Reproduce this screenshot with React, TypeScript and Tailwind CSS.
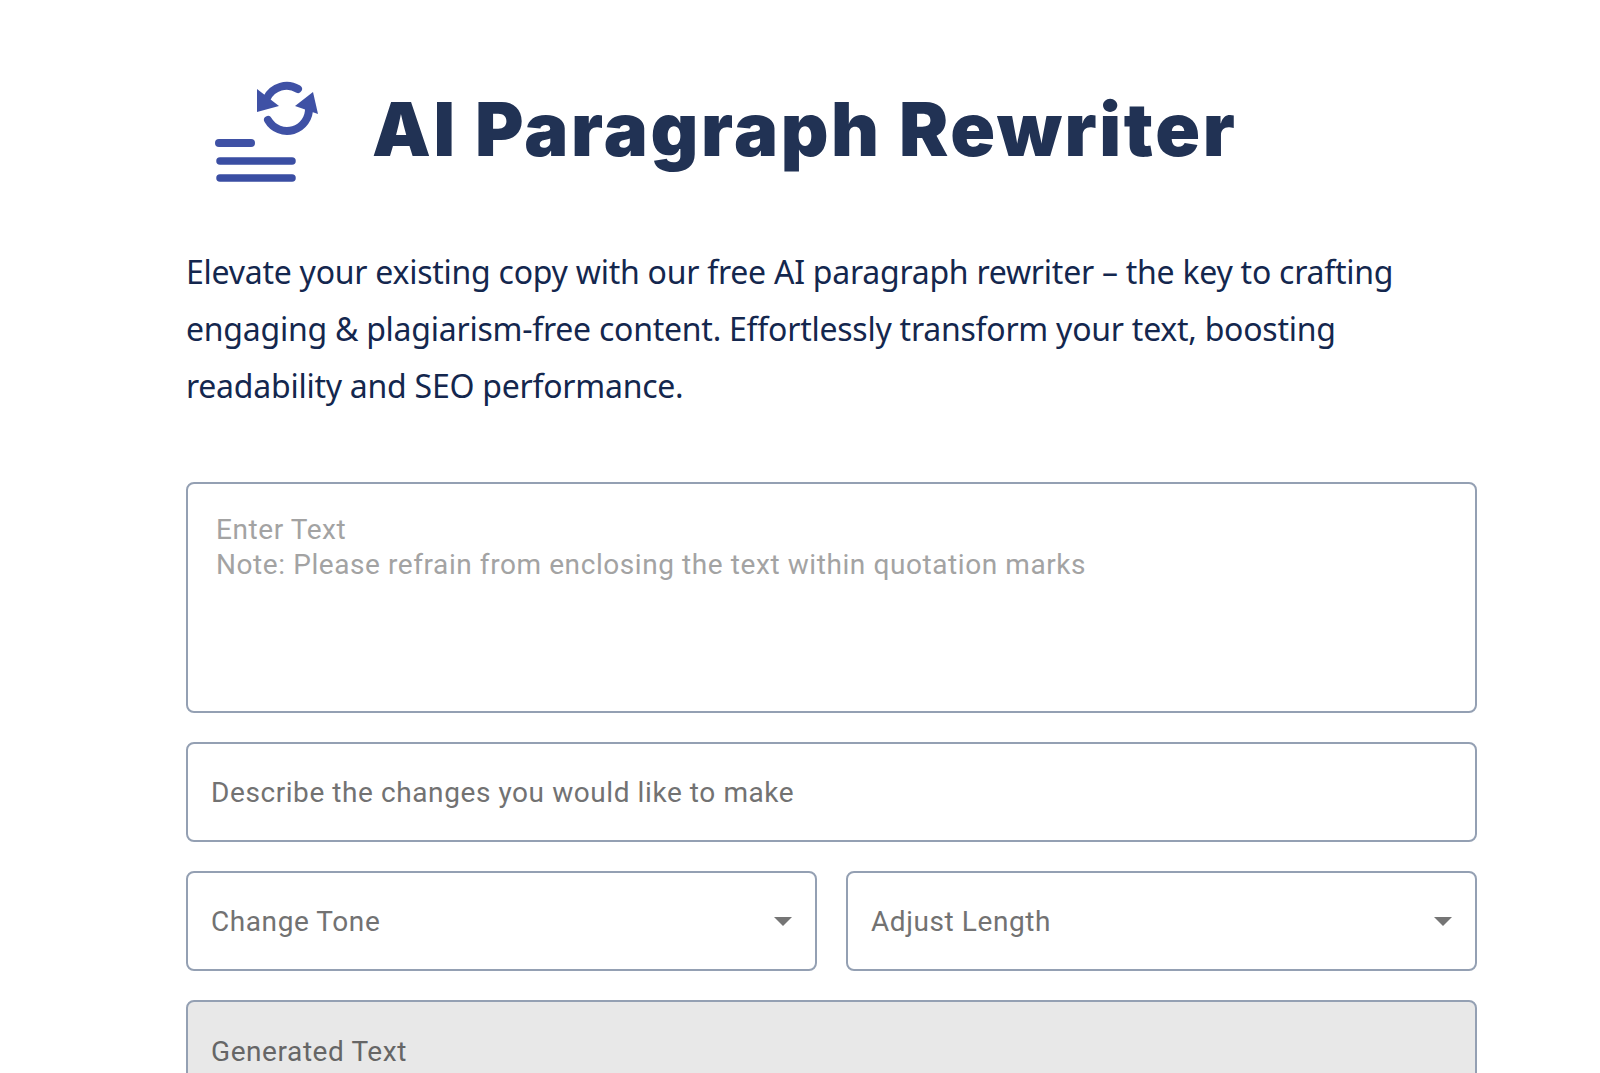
import React from 'react';

const LogoIcon = () => (
    <svg width="112" height="108" viewBox="0 3 112 108" fill="none" className="shrink-0">
        <path d="M57 21 A22 22 0 0 1 88 12" stroke="#3f51a5" strokeWidth="8" strokeLinecap="round" />
        <path d="M58 43 A22 22 0 0 0 99 31" stroke="#3f51a5" strokeWidth="8" strokeLinecap="round" />
        <path d="M47 12 L47 35 L69 29 Z" fill="#3f51a5" />
        <path d="M103 15 L108 37 L85 29 Z" fill="#3f51a5" />
        <path d="M9 66 H41" stroke="#3f51a5" strokeWidth="8" strokeLinecap="round" />
        <path d="M10 84 H82" stroke="#3a4ea3" strokeWidth="7.5" strokeLinecap="round" />
        <path d="M10 101 H82" stroke="#3a4ea3" strokeWidth="7.5" strokeLinecap="round" />
    </svg>
);

const Caret = () => (
    <span className="w-0 h-0 border-l-[9px] border-r-[9px] border-t-[9px] border-l-transparent border-r-transparent border-t-[#757575]" />
);

const SelectBox: React.FC<{ label: string }> = ({ label }) => (
    <div className="w-[631px] h-[100px] border-2 border-[#94a0b3] rounded-lg bg-white flex items-center justify-between pl-[23px] pr-[23px]">
        <span className="pt-[2px]">{label}</span>
        <Caret />
    </div>
);

const App: React.FC = () => {
    return (
        <div className="w-[1600px] h-[1073px] overflow-hidden bg-white pl-[186px] pr-[123px] pt-[80px]">
            <div className="flex items-center pl-[24px] gap-[50px] h-[108px]">
                <LogoIcon />
                <h1 className="mb-[10px] font-['Inter',sans-serif] font-black text-[#213254] text-[74px] leading-none tracking-[2.6px] whitespace-nowrap">
                    AI Paragraph Rewriter
                </h1>
            </div>

            <p className="mt-[55px] font-['Noto_Sans',sans-serif] text-[#14274e] text-[32px] leading-[57px] tracking-[-0.25px]">
                Elevate your existing copy with our free AI paragraph rewriter – the key to crafting<br />
                engaging &amp; plagiarism-free content. Effortlessly transform your text, boosting<br />
                readability and SEO performance.
            </p>

            <div className="mt-[68px] flex flex-col gap-[29px] font-['Roboto',sans-serif] text-[28px] text-[#727272] tracking-[0.58px]">
                <div className="h-[231px] border-2 border-[#94a0b3] rounded-lg bg-white pl-[28px] pt-[29px] leading-[34.5px] text-[#a3a3a3]">
                    Enter Text<br />
                    Note: Please refrain from enclosing the text within quotation marks
                </div>
                <div className="h-[100px] border-2 border-[#94a0b3] rounded-lg bg-white flex items-center pl-[23px] pt-[2px]">
                    Describe the changes you would like to make
                </div>
                <div className="flex gap-[29px]">
                    <SelectBox label="Change Tone" />
                    <SelectBox label="Adjust Length" />
                </div>
                <div className="h-[200px] border-2 border-[#94a0b3] rounded-lg bg-[#e8e8e8] pl-[23px] pt-[32px] text-[#666666] leading-[35px]">
                    Generated Text
                </div>
            </div>
        </div>
    );
};

export default App;
